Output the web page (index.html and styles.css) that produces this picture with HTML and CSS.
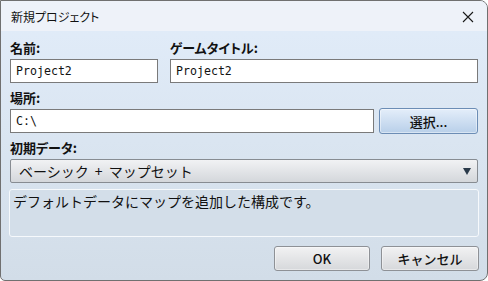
FILE: index.html
```html
<!DOCTYPE html>
<html lang="ja">
<head>
<meta charset="utf-8">
<title>新規プロジェクト</title>
<link rel="stylesheet" href="styles.css">
</head>
<body>
<div class="window">
  <div class="titlebar">
    <span class="title">新規プロジェクト</span>
    <svg class="close" width="12" height="12" viewBox="0 0 12 12"><path d="M1 1 L11 11 M11 1 L1 11" stroke="#1a1a1a" stroke-width="1.1" fill="none"/></svg>
  </div>
  <div class="content">
    <div class="row two">
      <div class="col name">
        <label class="label">名前:</label>
        <div class="input">Project2</div>
      </div>
      <div class="col game">
        <label class="label">ゲームタイトル:</label>
        <div class="input">Project2</div>
      </div>
    </div>
    <div class="field">
      <label class="label">場所:</label>
      <div class="pathrow">
        <div class="input path">C:\</div>
        <button class="btn choose">選択...</button>
      </div>
    </div>
    <div class="field">
      <label class="label">初期データ:</label>
      <div class="select"><span class="seltext">ベーシック + マップセット</span><span class="arrow"></span></div>
    </div>
    <div class="desc">デフォルトデータにマップを追加した構成です。</div>
    <div class="actions">
      <button class="btn plain ok">OK</button>
      <button class="btn plain cancel">キャンセル</button>
    </div>
  </div>
</div>
</body>
</html>
```
FILE: styles.css
```css
* { box-sizing: border-box; }
html, body { margin: 0; padding: 0; }
body {
  width: 488px; height: 281px; overflow: hidden;
  font-family: "Noto Sans CJK JP", "Noto Sans", sans-serif;
  color: #111;
}
.window {
  width: 488px; height: 281px;
  border: 1px solid #707070;
  border-radius: 0 8px 8px 5px;
  overflow: hidden;
  display: flex; flex-direction: column;
  background: linear-gradient(#e2edfa, #d2dde8);
}
.titlebar {
  height: 30px; flex: none;
  background: #eef2f9;
  display: flex; align-items: center; justify-content: space-between;
  padding: 0 13px 0 10px;
}
.title { font-size: 12px; font-feature-settings: "palt"; line-height: 1; padding-top: 1px; }
.close { display: block; margin-top: 1px; }
.content {
  flex: 1;
  padding: 8px 9px 0 9px;
  display: flex; flex-direction: column;
}
.label {
  display: block; height: 17px; line-height: 17px;
  font-size: 13px; font-weight: bold; margin-bottom: 3px;
  font-feature-settings: "palt";
}
.row.two { display: flex; gap: 12px; }
.name { width: 148px; flex: none; }
.game { flex: 1; }
.input {
  height: 24px; background: #fff; border: 1px solid #7a7a7a;
  font-family: "DejaVu Sans Mono", "Liberation Mono", monospace;
  font-size: 11.6px; line-height: 22px; padding-left: 5px;
}
.field { margin-top: 6px; }
.pathrow { display: flex; align-items: center; gap: 5px; margin-right: -1px; }
.path { width: 364px; flex: none; }
.btn {
  font-family: "Noto Sans CJK JP", "Noto Sans", sans-serif;
  font-size: 13px; color: #111; padding: 0; margin: 0;
  border-radius: 3px; cursor: default;
}
.choose {
  width: 99px; height: 26px; margin-top: -1px; margin-bottom: -1px;
  border: 1px solid #6c8db5;
  background: linear-gradient(#e4eefa, #b8cfe9);
  box-shadow: inset 0 0 0 1px rgba(255,255,255,0.45);
  font-weight: 500;
}
.select {
  height: 24px; border: 1px solid #878c92; border-radius: 2px;
  background: linear-gradient(#f1f2f4, #d4d7db);
  display: flex; align-items: center; justify-content: space-between;
  padding: 0 6px 0 8px; font-size: 14px;
}
.seltext { word-spacing: 3px; }
.arrow {
  width: 0; height: 0;
  border-left: 4px solid transparent; border-right: 4px solid transparent;
  border-top: 7px solid #2a3a4a;
}
.desc {
  margin: 6px -1px 0 -1px; height: 48px;
  border: 1px solid #f6f9fc; border-radius: 3px;
  background: #d3dee9;
  font-size: 14px; padding: 1px 0 0 3px; line-height: 20px;
}
.actions { display: flex; justify-content: flex-end; gap: 11px; margin-top: 9px; margin-right: -1px; }
.plain {
  height: 25px;
  border: 1px solid #8e9196;
  background: linear-gradient(#f2f2f3, #d6d8db);
  box-shadow: inset 0 0 0 1px rgba(255,255,255,0.4);
  font-weight: 500;
}
.ok { width: 96px; }
.cancel { width: 98px; }
```
